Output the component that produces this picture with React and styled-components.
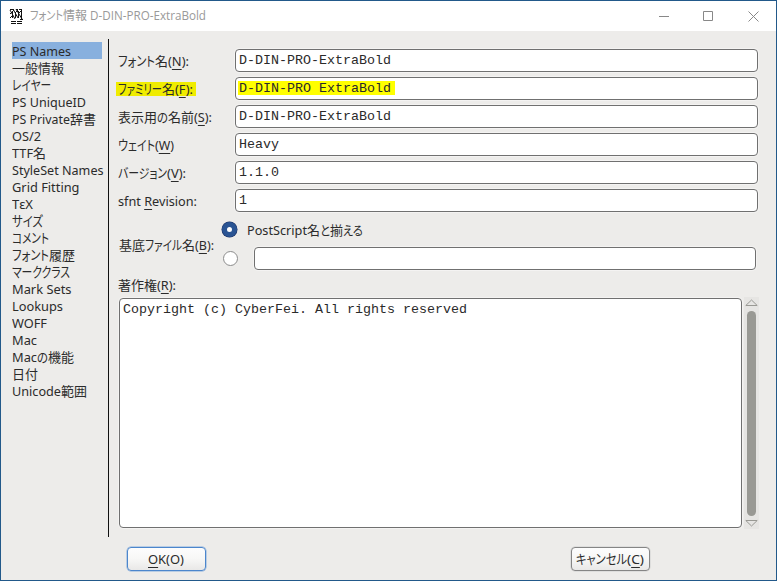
import React, { useLayoutEffect, useRef } from 'react'
import styled, { createGlobalStyle } from 'styled-components'

const GlobalStyle = createGlobalStyle`
* { box-sizing: border-box; }
body { margin: 0; overflow: hidden; }
`;

const Window = styled.div`
width: 777px;
height: 581px;
display: flex;
flex-direction: column;
background: #edecea;
border: 1px solid #22598a;
font-family: "Noto Sans", "Noto Sans CJK JP", sans-serif;
font-size: 13px;
color: #2b2b2b;
`;

const TitleBar = styled.div`
height: 30px;
display: flex;
align-items: center;
background: #ffffff;
padding: 0 17px 0 8px;
`;

const Title = styled.div`
flex: 1;
display: flex;
margin-left: 6px;
font-family: "Open Sans", "Noto Sans CJK JP", sans-serif;
font-size: 12px;
line-height: 18px;
color: #999999;
`;

const WindowButtons = styled.div`
display: flex;
gap: 34px;
`;

const Body = styled.div`
display: flex;
height: 498px;
margin-top: 8px;
`;

const Sidebar = styled.div`
width: 108px;
padding: 3px 0 0 11px;
border-right: 1px solid #111111;
`;

const Item = styled.div`
display: flex;
width: ${props => props.$active ? '90px' : '96px'};
height: 17px;
line-height: 18px;
background: ${props => props.$active ? '#88b0de' : 'transparent'};
`;

const Main = styled.div`
display: flex;
flex-direction: column;
padding: 10px 0 0 9px;
`;

const Row = styled.div`
display: flex;
align-items: flex-start;
height: 28px;
`;

const LabelCell = styled.div`
width: ${props => props.$width || '117px'};
padding-top: ${props => props.$top || '3px'};
`;

const Label = styled.span`
display: inline-flex;
height: 18px;
line-height: 19px;
margin-left: -1px;
padding-left: 1px;
`;

const Marked = styled.div`
display: inline-flex;
height: 14px;
width: 80px;
margin: 2px 0 0 -2px;
padding-left: 2px;
background: #f0ec00;
line-height: 15px;
`;

const Field = styled.div`
width: ${props => props.$width || '523px'};
height: 23px;
padding: 3px;
border: 1px solid #707070;
border-radius: 4px;
background: #ffffff;
box-shadow: 0 0 0 1px #f4f3f2;
font-family: "Liberation Mono", monospace;
font-size: 13.33px;
line-height: 15px;
color: #2a2a2a;
white-space: pre;
`;

const Highlight = styled.span`
display: inline-block;
height: 14px;
margin-left: -1px;
padding: 0 4px 0 1px;
background: #ffff00;
line-height: 15px;
`;

const FileRow = styled.div`
display: flex;
height: 53px;
`;

const Choices = styled.div`
display: flex;
flex-direction: column;
padding-top: 5px;
`;

const Choice = styled.div`
display: flex;
flex: none;
align-items: center;
height: ${props => props.$height};
padding-left: ${props => props.$left};
gap: ${props => props.$gap};
`;

const Radio = styled.div`
width: 15px;
height: 15px;
border-radius: 50%;
border: ${props => props.$checked ? '5px solid #2a5493' : '1px solid #8c8c8c'};
box-shadow: ${props => props.$checked ? '0 0 0 0.5px #1a2f63' : 'none'};
background: #ffffff;
`;

const CopyrightLabel = styled.div`
height: 28px;
padding-top: 7px;
margin-top: -1px;
`;

const AreaRow = styled.div`
display: flex;
gap: 2px;
margin-left: 1px;
`;

const TextArea = styled(Field)`
width: 623px;
height: 230px;
margin-top: 1px;
padding: 3px;
line-height: 16px;
`;

const ScrollBar = styled.div`
display: flex;
flex-direction: column;
align-items: center;
justify-content: space-between;
width: 15px;
height: 232px;
padding: 2px 0 2px;
background: #e6e5e3;
`;

const Thumb = styled.div`
width: 9px;
height: 205px;
border-radius: 5px;
background: #999994;
`;

const Footer = styled.div`
display: flex;
justify-content: space-between;
padding: 10px 126px 0 126px;
`;

const Button = styled.div`
display: flex;
justify-content: center;
width: 79px;
height: 24px;
padding-right: 2px;
border: 1px solid ${props => props.$default ? '#4c86cc' : '#858585'};
border-radius: 4px;
background: linear-gradient(#fdfdfd, #f7f7f6 50%, #e9e8e7);
box-shadow: 0 0 0 ${props => props.$default ? '0.5px #86aedd' : '0.5px #d0d0cf'};
line-height: 22px;
`;

const Key = styled.span`
text-decoration: underline;
text-decoration-thickness: 1px;
text-underline-offset: 3px;
text-decoration-skip-ink: none;
`;

const FitBox = styled.span`
display: block;
flex: none;
white-space: pre;
`;

const FitText = styled.span`
display: inline-block;
transform-origin: 0 50%;
font-size: ${props => props.$kana ? '1.03em' : '1em'};
font-feature-settings: "palt";
`;

// squeezes a run of text into the advance width that the UI font has
const Fit = ({ w, children }) => {
    const ref = useRef(null)
    const kana = typeof children === 'string' && /^[ァ-ヶー]+$/.test(children)

    useLayoutEffect(() => {
        const el = ref.current
        const fit = () => {
            el.style.transform = 'none'
            const natural = el.getBoundingClientRect().width
            el.style.transform = `scaleX(${w / natural})`
        }
        fit()
        document.fonts.ready.then(fit)
    }, [w])

    return <FitBox style={{ width: w }}><FitText ref={ref} $kana={kana}>{children}</FitText></FitBox>
}

const items = [
    [['PS Names', 59]],
    [['一般情報', 52]],
    [['レイヤー', 39]],
    [['PS UniqueID', 74]],
    [['PS Private', 58], ['辞書', 26]],
    [['OS/2', 29]],
    [['TTF', 21], ['名', 13]],
    [['StyleSet Names', 91.5]],
    [['Grid Fitting', 67.5]],
    [['TεX', 21]],
    [['サイズ', 31]],
    [['コメント', 37]],
    [['フォント', 37], ['履歴', 26]],
    [['マーククラス', 58]],
    [['Mark Sets', 59.5]],
    [['Lookups', 51]],
    [['WOFF', 35]],
    [['Mac', 25]],
    [['Mac', 25], ['の', 11], ['機能', 26]],
    [['日付', 26]],
    [['Unicode', 49], ['範囲', 26]],
]

const fields = [
    { label: [['フォント', 37], ['名', 13]], k: 'N', w: 21, value: 'D-DIN-PRO-ExtraBold' },
    { label: [['ファミリー', 44], ['名', 13]], k: 'F', w: 18, value: 'D-DIN-PRO ExtraBold', marked: true },
    { label: [['表示用', 39], ['の', 11], ['名前', 26]], k: 'S', w: 18, value: 'D-DIN-PRO-ExtraBold' },
    { label: [['ウェイト', 37]], k: 'W', w: 19, end: ')', value: 'Heavy' },
    { label: [['バージョン', 49]], k: 'V', w: 19, value: '1.1.0' },
]

const Runs = ({ parts }) => parts.map(([text, w], i) => <Fit key={i} w={w}>{text}</Fit>)

const Mnemonic = ({ k, w, end = '):' }) => <Fit w={w}>(<Key>{k}</Key>{end}</Fit>

const AppIcon = () => (
    <svg width="15" height="16" viewBox="0 0 15 16" fill="none" stroke="#111" shapeRendering="crispEdges">
        <path d="M1 1.5h4M7 1.5h2M10 1.5h3M11 11.5h3M2 13.5h5M8 13.5h5M2 15.5h5M8 15.5h5" />
        <path d="M3.5 3v7M6.5 4v6M9.5 3v7M12.5 2v9" />
        <path d="M1 2l5 9M4 1l5 9M7 1l6 10M1 6l4-4M6 5l3-3M10 5l3-3M1 10l3-3M6 9l2-2" shapeRendering="auto" />
    </svg>
)

const Arrow = ({ down }) => (
    <svg width="13" height="8" viewBox="0 0 13 8" fill="none" stroke="#999994">
        <path d={down ? 'M.8 1.5h11.4L6.5 7z' : 'M.8 6.5h11.4L6.5 1z'} />
    </svg>
)

const App = () => (
    <>
        <GlobalStyle />
        <Window>
            <TitleBar>
                <AppIcon />
                <Title>
                    <Runs parts={[['フォント', 33], ['情報', 24], [' ', 3], ['D-DIN-PRO-ExtraBold', 116]]} />
                </Title>
                <WindowButtons>
                    <svg width="10" height="11" stroke="#888"><path d="M0 5.5h10" /></svg>
                    <svg width="11" height="11" stroke="#888" fill="none"><path d="M.5.5h9v9h-9z" /></svg>
                    <svg width="11" height="11" stroke="#888"><path d="M.5.5l10 10M10.5.5l-10 10" /></svg>
                </WindowButtons>
            </TitleBar>
            <Body>
                <Sidebar>
                    {items.map((parts, i) => (
                        <Item key={i} $active={i === 0}><Runs parts={parts} /></Item>
                    ))}
                </Sidebar>
                <Main>
                    {fields.map(f => {
                        const Box = f.marked ? Marked : Label
                        return (
                            <Row key={f.k}>
                                <LabelCell>
                                    <Box><Runs parts={f.label} /><Mnemonic k={f.k} w={f.w} end={f.end} /></Box>
                                </LabelCell>
                                <Field>{f.marked ? <Highlight>{f.value}</Highlight> : f.value}</Field>
                            </Row>
                        )
                    })}
                    <Row>
                        <LabelCell>
                            <Label><Fit w={79}>sfnt <Key>R</Key>evision:</Fit></Label>
                        </LabelCell>
                        <Field>1</Field>
                    </Row>
                    <FileRow>
                        <LabelCell $width="104px" $top="19px">
                            <Label>
                                <Runs parts={[[' ', 1], ['基底', 26], ['ファイル', 37], ['名', 13]]} />
                                <Mnemonic k="B" w={19} />
                            </Label>
                        </LabelCell>
                        <Choices>
                            <Choice $height="15px" $left="0" $gap="10px">
                                <Radio $checked />
                                <Label><Runs parts={[['PostScript', 60], ['名', 13], ['と', 10], ['揃', 13], ['える', 20]]} /></Label>
                            </Choice>
                            <Choice $height="43px" $left="1px" $gap="16px">
                                <Radio />
                                <Field $width="502px" />
                            </Choice>
                        </Choices>
                    </FileRow>
                    <CopyrightLabel>
                        <Label><Runs parts={[['著作権', 39]]} /><Mnemonic k="R" w={19} /></Label>
                    </CopyrightLabel>
                    <AreaRow>
                        <TextArea>Copyright (c) CyberFei. All rights reserved</TextArea>
                        <ScrollBar>
                            <Arrow />
                            <Thumb />
                            <Arrow down />
                        </ScrollBar>
                    </AreaRow>
                </Main>
            </Body>
            <Footer>
                <Button $default><Fit w={36}><Key>O</Key>K(O)</Fit></Button>
                <Button><Runs parts={[['キャンセル', 51]]} /><Mnemonic k="C" w={17} end=")" /></Button>
            </Footer>
        </Window>
    </>
)

export default App
